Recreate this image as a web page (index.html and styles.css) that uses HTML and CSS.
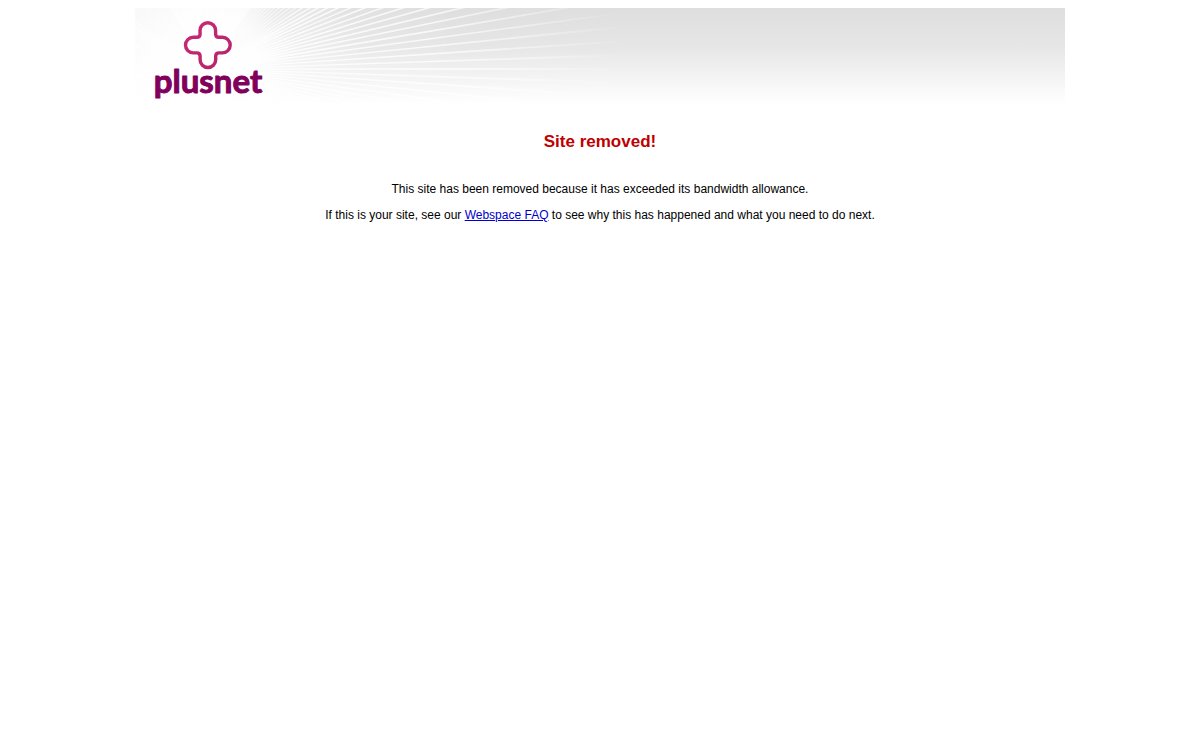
FILE: index.html
```html
<!DOCTYPE html>
<html lang="en">
<head>
<meta charset="utf-8">
<title>Site removed!</title>
<link rel="stylesheet" href="styles.css">
</head>
<body>
<div class="page">
  <header class="banner">
    <svg class="banner-art" width="930" height="96" viewBox="0 0 930 96" role="img" aria-label="plusnet">
      <defs>
        <radialGradient id="glow" gradientUnits="userSpaceOnUse" cx="73" cy="61" r="260">
          <stop offset="0" stop-color="#fff" stop-opacity=".9"/>
          <stop offset=".2" stop-color="#fff" stop-opacity=".8"/>
          <stop offset=".35" stop-color="#fff" stop-opacity=".35"/>
          <stop offset=".6" stop-color="#fff" stop-opacity=".1"/>
          <stop offset="1" stop-color="#fff" stop-opacity="0"/>
        </radialGradient>
        <linearGradient id="edge">
          <stop offset="0" stop-color="#fff" stop-opacity=".65"/>
          <stop offset=".6" stop-color="#fff" stop-opacity=".6"/>
          <stop offset="1" stop-color="#fff" stop-opacity="0"/>
        </linearGradient>
        <radialGradient id="ray" gradientUnits="userSpaceOnUse" cx="73" cy="61" r="420">
          <stop offset="0" stop-color="#fff" stop-opacity=".9"/>
          <stop offset=".55" stop-color="#fff" stop-opacity=".75"/>
          <stop offset=".8" stop-color="#fff" stop-opacity=".35"/>
          <stop offset="1" stop-color="#fff" stop-opacity="0"/>
        </radialGradient>
        <linearGradient id="cross" x1="0" y1="0" x2="1" y2="1">
          <stop offset="0" stop-color="#cb2875"/>
          <stop offset="1" stop-color="#b4246b"/>
        </linearGradient>
      </defs>
      <rect width="930" height="96" fill="url(#glow)"/>
      <circle cx="73" cy="61" r="215" fill="none" stroke="url(#ray)" stroke-width="430" pathLength="186" stroke-dasharray=".22 .78" stroke-dashoffset=".11"/>
      <rect width="140" height="96" fill="url(#edge)"/>
      <path d="M65 22.500a7.800 7.800 0 0 1 15.600 0V26q0 3.300 3.300 3.300h3.500a7.800 7.800 0 0 1 0 15.600H84q-3.300 0-3.300 3.300v3.500a7.800 7.800 0 0 1-15.600 0v-3.500q0-3.300-3.300-3.300h-3.500a7.800 7.800 0 0 1 0-15.600h3.500q3.300 0 3.300-3.300z" fill="none" stroke="url(#cross)" stroke-width="3.400"/>
      <text class="wordmark" x="73" y="85" text-anchor="middle">plusnet</text>
    </svg>
  </header>
  <main class="message">
    <h1>Site removed!</h1>
    <p>This site has been removed because it has exceeded its bandwidth allowance.</p>
    <p>If this is your site, see our <a href="#faq">Webspace FAQ</a> to see why this has happened and what you need to do next.</p>
  </main>
</div>
</body>
</html>
```
FILE: styles.css
```css
body {
  margin: 8px;
  background: #fff;
  color: #000;
  font-family: "Liberation Sans", Arial, sans-serif;
  font-size: 12px;
  line-height: 14px;
}

.page {
  max-width: 930px;
  margin: 0 auto;
}

.banner {
  overflow: hidden;
  background: linear-gradient(#dedede, #e6e6e6 40%, #fff);
}

.banner-art {
  display: block;
}

.wordmark {
  font-family: Lato, "Open Sans", sans-serif;
  font-size: 33px;
  font-weight: 700;
  fill: #80005c;
  stroke: #80005c;
  stroke-width: 1px;
  stroke-linejoin: round;
}

.message {
  padding-top: 29px;
  text-align: center;
}

.message h1 {
  margin: 0 0 31px;
  color: #c00000;
  font-size: 17px;
  line-height: 18px;
}

.message p {
  margin: 0 0 12px;
}

.message a {
  color: #00c;
}
```
